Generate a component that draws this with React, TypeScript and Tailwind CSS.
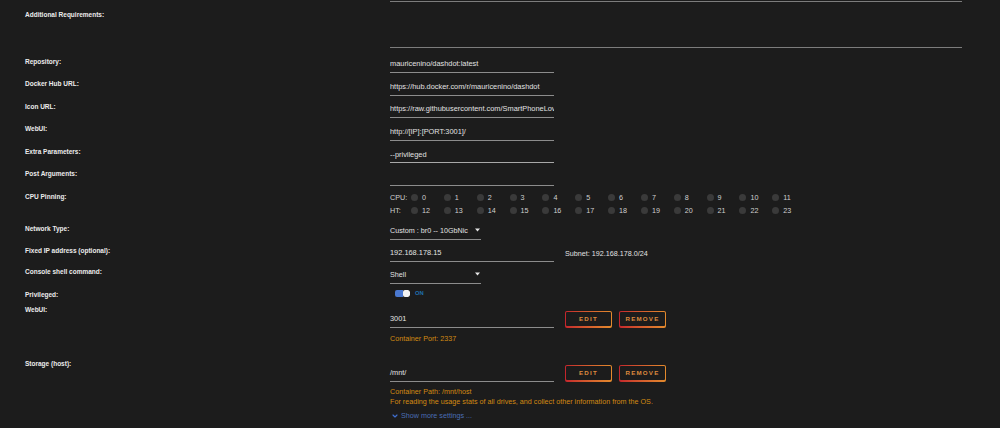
import { ChevronDown } from "lucide-react";

const cpuRow = Array.from({ length: 12 }, (_, i) => i);

function RowLabel({ children }: { children: React.ReactNode }) {
  return (
    <div className="w-[390px] shrink-0 pl-[25px] text-[6.5px] font-bold leading-[8px] text-[#ececec]">
      {children}
    </div>
  );
}

function Field({ label, value, thick }: { label: string; value?: string; thick?: boolean }) {
  return (
    <div className="flex h-[22.5px]">
      <div className="pt-[7px]">
        <RowLabel>{label}</RowLabel>
      </div>
      <div
        className={
          thick
            ? "flex h-full w-[164px] items-end border-b-[1.5px] border-[#a8a8a8] pb-[3.5px]"
            : "flex h-full w-[164px] items-end border-b border-[#8c8c8c] pb-[4px]"
        }
      >
        <input
          readOnly
          value={value ?? ""}
          className="w-full bg-transparent p-0 text-[7.4px] leading-[9px] text-[#e2e2e2] outline-none"
        />
      </div>
    </div>
  );
}

function Caret() {
  return (
    <svg width="5" height="4" viewBox="0 0 5 4" className="mb-[2.5px] mr-[1px]">
      <path d="M0 0.5h5L2.5 3.5z" fill="#e6e6e6" />
    </svg>
  );
}

function Select({ value }: { value: string }) {
  return (
    <div className="flex h-full w-[91px] items-end justify-between whitespace-nowrap border-b border-[#8c8c8c] pb-[4px] text-[7.2px] leading-[9px] text-[#e2e2e2]">
      <span>{value}</span>
      <Caret />
    </div>
  );
}

function GradButton({ children }: { children: React.ReactNode }) {
  return (
    <div className="h-[17px] w-[47px] rounded-[2px] bg-linear-to-r from-[#c4242c] to-[#e38a2c] p-[1.2px]">
      <div className="flex h-full w-full items-center justify-center rounded-[1px] bg-[#1c1c1c] text-[6.2px] font-bold tracking-[1.2px] text-[#de8a3e]">
        {children}
      </div>
    </div>
  );
}

function CpuLine({ name, offset }: { name: string; offset: number }) {
  return (
    <div className="flex h-[13px] items-center text-[7.2px] leading-[8px] text-[#d0d0d0]">
      <span className="w-[21px] shrink-0">{name}</span>
      {cpuRow.map((i) => (
        <div key={i} className="flex w-[32.85px] shrink-0 items-center gap-[4px]">
          <span className="h-[7px] w-[7px] rounded-full bg-[#3a3a3a]" />
          <span>{i + offset}</span>
        </div>
      ))}
    </div>
  );
}

export default function App() {
  return (
    <div
      className="h-[428px] w-[1000px] overflow-hidden bg-[#1c1c1c]"
      style={{ fontFamily: '"Liberation Sans", Arial, sans-serif' }}
    >
      {/* additional requirements textarea */}
      <div className="flex h-[48px]">
        <div className="pt-[11px]">
          <RowLabel>Additional Requirements:</RowLabel>
        </div>
        <div className="mt-px h-[47px] w-[572px] border-y border-[#7c7c7c]" />
      </div>

      <div className="h-[2.5px]" />
      <Field label="Repository:" value="mauricenino/dashdot:latest" />
      <Field label="Docker Hub URL:" value="https://hub.docker.com/r/mauricenino/dashdot" />
      <Field label="Icon URL:" value="https://raw.githubusercontent.com/SmartPhoneLover/unraid-templates/main/images/dashdot.png" />
      <Field label="WebUI:" value="http://[IP]:[PORT:3001]/" />
      <Field label="Extra Parameters:" value="--privileged" thick />
      <Field label="Post Arguments:" />

      {/* cpu pinning */}
      <div className="flex h-[31.5px]">
        <div className="pt-[7px]">
          <RowLabel>CPU Pinning:</RowLabel>
        </div>
        <div className="pt-[5.5px]">
          <CpuLine name="CPU:" offset={0} />
          <CpuLine name="HT:" offset={12} />
        </div>
      </div>

      <div className="flex h-[22.5px]">
        <div className="pt-[7.5px]">
          <RowLabel>Network Type:</RowLabel>
        </div>
        <Select value="Custom : br0 -- 10GbNic" />
      </div>

      <div className="flex h-[22px]">
        <div className="pt-[7px]">
          <RowLabel>Fixed IP address (optional):</RowLabel>
        </div>
        <div className="flex h-full w-[164px] items-end border-b border-[#8c8c8c] pb-[4px] text-[7.4px] leading-[9px] text-[#e2e2e2]">
          192.168.178.15
        </div>
        <div className="ml-[11px] flex items-end pb-[4px] text-[7.2px] leading-[9px] text-[#e2e2e2]">
          Subnet: 192.168.178.0/24
        </div>
      </div>

      <div className="flex h-[22px]">
        <div className="pt-[6.5px]">
          <RowLabel>Console shell command:</RowLabel>
        </div>
        <Select value="Shell" />
      </div>

      {/* privileged toggle */}
      <div className="flex h-[19px]">
        <div className="pt-[7px]">
          <RowLabel>Privileged:</RowLabel>
        </div>
        <div className="flex items-start gap-[5px] pl-[5px] pt-[6.5px]">
          <div className="flex h-[7px] w-[15px] overflow-hidden rounded-[2px]">
            <span className="w-[8px] bg-[#4a78d0]" />
            <span className="w-[7px] rounded-[2px] bg-[#f2f2f2]" />
          </div>
          <span className="text-[5.8px] font-bold leading-[7px] text-[#1f6fae]">ON</span>
        </div>
      </div>

      {/* port mapping */}
      <div className="flex">
        <div className="pt-[3px]">
          <RowLabel>WebUI:</RowLabel>
        </div>
        <div>
          <div className="flex h-[25px] items-end gap-[11px]">
            <div className="flex h-full w-[164px] items-end border-b border-[#8c8c8c] pb-[4px] text-[7.4px] leading-[9px] text-[#e2e2e2]">
              3001
            </div>
            <div className="flex gap-[7px]">
              <GradButton>EDIT</GradButton>
              <GradButton>REMOVE</GradButton>
            </div>
          </div>
          <div className="pt-[6.5px] text-[7.2px] leading-[9px] text-[#d28a12]">Container Port: 2337</div>
        </div>
      </div>

      <div className="h-[13.5px]" />

      {/* storage */}
      <div className="flex">
        <div className="pt-[3px]">
          <RowLabel>Storage (host):</RowLabel>
        </div>
        <div>
          <div className="flex h-[25px] items-end gap-[11px]">
            <div className="flex h-full w-[164px] items-end border-b border-[#8c8c8c] pb-[4px] text-[7.4px] leading-[9px] text-[#e2e2e2]">
              /mnt/
            </div>
            <div className="flex gap-[7px]">
              <GradButton>EDIT</GradButton>
              <GradButton>REMOVE</GradButton>
            </div>
          </div>
          <div className="pt-[5.5px] text-[7.2px] leading-[10px] text-[#d28a12]">
            <div>Container Path: /mnt/host</div>
            <div>For reading the usage stats of all drives, and collect other information from the OS.</div>
          </div>
          <div className="mt-[4px] flex items-center gap-[2px] pl-[1px] text-[7.2px] leading-[9px] text-[#4a6db4]">
            <ChevronDown size={8} strokeWidth={3.5} className="text-[#3f6fd0]" />
            <span>Show more settings ...</span>
          </div>
        </div>
      </div>
    </div>
  );
}
